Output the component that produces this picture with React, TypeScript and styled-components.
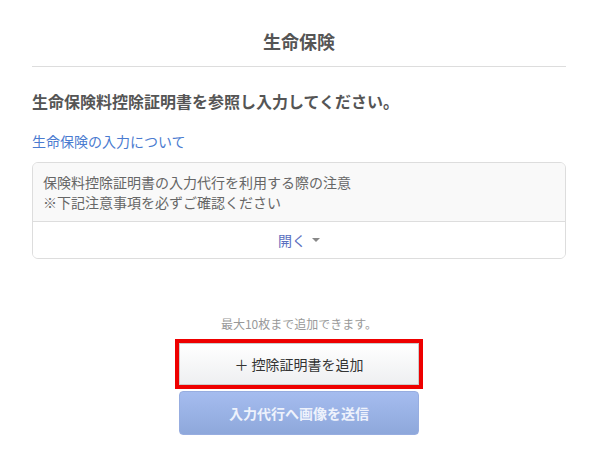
import styled, { createGlobalStyle } from 'styled-components'

const GlobalStyle = createGlobalStyle`
  html, body {
    margin: 0;
    padding: 0;
    background: #ffffff;
  }
  body {
    font-family: "Noto Sans CJK JP", "Noto Sans", sans-serif;
    color: #555555;
  }
`

const Page = styled.div`
  padding: 0 32px;
  width: 598px;
  box-sizing: border-box;
`

const Title = styled.h1`
  margin: 0;
  padding: 28px 0 12px;
  font-size: 18px;
  line-height: 26px;
  font-weight: 700;
  text-align: center;
  color: #555555;
  border-bottom: 1px solid #dddddd;
`

const Lead = styled.h2`
  margin: 22px 0 0;
  font-size: 16px;
  line-height: 24px;
  font-weight: 700;
  color: #555555;
`

const InfoLink = styled.a`
  display: block;
  margin-top: 18px;
  font-size: 14px;
  line-height: 20px;
  color: #4a7bd0;
  text-decoration: none;
`

const Card = styled.div`
  margin-top: 11px;
  border: 1px solid #dddddd;
  border-radius: 6px;
  overflow: hidden;
`

const CardBody = styled.div`
  padding: 9px 10px;
  background: #f9f9f9;
  border-bottom: 1px solid #dddddd;
  font-size: 14px;
  line-height: 20px;
  color: #666666;
`

const Toggle = styled.button`
  display: flex;
  align-items: center;
  justify-content: center;
  gap: 6px;
  width: 100%;
  height: 36px;
  border: none;
  background: #ffffff;
  font-family: inherit;
  font-size: 14px;
  color: #5a6fc0;
  cursor: pointer;
`

const Caret = styled.span`
  width: 0;
  height: 0;
  border-left: 4px solid transparent;
  border-right: 4px solid transparent;
  border-top: 4px solid #888888;
`

const Footer = styled.div`
  display: flex;
  flex-direction: column;
  align-items: center;
  margin-top: 56px;
`

const Note = styled.p`
  margin: 0;
  font-size: 12px;
  line-height: 18px;
  color: #999999;
`

const ActionButton = styled.button<{ $primary?: boolean }>`
  width: 240px;
  box-sizing: border-box;
  font-family: inherit;
  font-size: 14px;
  cursor: pointer;
  ${({ $primary }) =>
    $primary
      ? `
    margin-top: 6px;
    height: 44px;
    border-radius: 4px;
    border: 1px solid #97ade0;
    background: linear-gradient(#a5bcef, #8ea8db);
    color: #eef2fc;
    font-weight: 700;
  `
      : `
    margin-top: 10px;
    height: 42px;
    border-radius: 0;
    border: 1px solid #cccccc;
    background: linear-gradient(#ffffff, #eeeff1);
    color: #333333;
    outline: 4px solid #ee0000;
    outline-offset: 0;
  `}
`

export default function App() {
  return (
    <>
      <GlobalStyle />
      <Page>
        <Title>生命保険</Title>
        <Lead>生命保険料控除証明書を参照し入力してください。</Lead>
        <InfoLink href="#">生命保険の入力について</InfoLink>
        <Card>
          <CardBody>
            保険料控除証明書の入力代行を利用する際の注意
            <br />
            ※下記注意事項を必ずご確認ください
          </CardBody>
          <Toggle type="button">
            開く
            <Caret />
          </Toggle>
        </Card>
        <Footer>
          <Note>最大10枚まで追加できます。</Note>
          <ActionButton type="button">＋ 控除証明書を追加</ActionButton>
          <ActionButton type="button" $primary>
            入力代行へ画像を送信
          </ActionButton>
        </Footer>
      </Page>
    </>
  )
}
